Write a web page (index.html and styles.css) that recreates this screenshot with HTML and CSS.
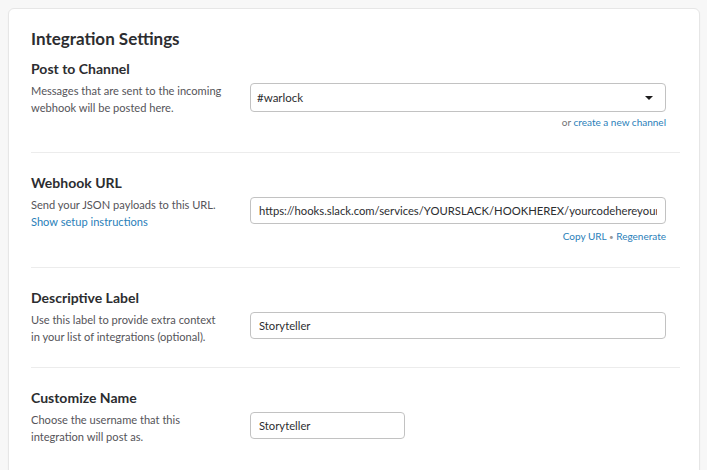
FILE: index.html
```html
<!DOCTYPE html>
<html lang="en">
<head>
<meta charset="utf-8">
<title>Integration Settings</title>
<link rel="stylesheet" href="styles.css">
</head>
<body>
<div class="page">
  <div class="card">
    <h1 class="title">Integration Settings</h1>

    <section class="section section-first">
      <h2 class="heading">Post to Channel</h2>
      <div class="row">
        <p class="desc">Messages that are sent to the incoming webhook will be posted here.</p>
        <div class="field">
          <div class="select"><span>#warlock</span><span class="caret"></span></div>
          <div class="links links-tight"><span class="muted">or</span> <a class="link" href="#">create a new channel</a></div>
        </div>
      </div>
    </section>

    <section class="section">
      <h2 class="heading">Webhook URL</h2>
      <div class="row">
        <p class="desc">Send your JSON payloads to this URL.<br><a class="link" href="#">Show setup instructions</a></p>
        <div class="field">
          <input class="input" type="text" value="https://hooks.slack.com/services/YOURSLACK/HOOKHEREX/yourcodehereyourcodehere">
          <div class="links"><a class="link" href="#">Copy URL</a> <span class="dot">•</span> <a class="link" href="#">Regenerate</a></div>
        </div>
      </div>
    </section>

    <section class="section">
      <h2 class="heading">Descriptive Label</h2>
      <div class="row">
        <p class="desc">Use this label to provide extra context in your list of integrations (optional).</p>
        <div class="field">
          <input class="input" type="text" value="Storyteller">
        </div>
      </div>
    </section>

    <section class="section section-last">
      <h2 class="heading">Customize Name</h2>
      <div class="row">
        <p class="desc">Choose the username that this integration will post as.</p>
        <div class="field">
          <input class="input input-short" type="text" value="Storyteller">
        </div>
      </div>
    </section>
  </div>
</div>
</body>
</html>
```

FILE: styles.css
```css
* { box-sizing: border-box; }

html, body {
  margin: 0;
  padding: 0;
  background: #f7f7f7;
  font-family: Lato, "Open Sans", "Liberation Sans", sans-serif;
  color: #2c2d30;
  overflow: hidden;
}

.page {
  padding: 8px 7px 0 8px;
}

.card {
  width: 692px;
  background: #ffffff;
  border: 1px solid #e6e6e6;
  border-radius: 6px;
  box-shadow: 0 1px 2px rgba(0, 0, 0, 0.03);
  padding: 18px 19px 40px 22px;
}

.title {
  margin: 0 0 8px 0;
  font-size: 17px;
  line-height: 24px;
  font-weight: 700;
  color: #2c2d30;
}

.section {
  padding: 20px 0 22px 0;
  border-bottom: 1px solid #ececec;
}

.section-first {
  padding-top: 0;
}

.section-last {
  border-bottom: none;
}

.heading {
  margin: 0 0 4px 0;
  font-size: 14px;
  line-height: 20px;
  font-weight: 700;
  color: #2c2d30;
}

.row {
  display: flex;
  align-items: flex-start;
}

.desc {
  width: 219px;
  flex-shrink: 0;
  margin: 0;
  font-size: 11.1px;
  line-height: 16.5px;
  color: #555459;
  padding-right: 25px;
}

.field {
  width: 416px;
  display: flex;
  flex-direction: column;
}

.select {
  height: 29px;
  border: 1px solid #c2c2c2;
  border-radius: 4px;
  background: #fff;
  display: flex;
  align-items: center;
  justify-content: space-between;
  padding: 0 12px 0 6px;
  font-size: 11.5px;
  color: #2c2d30;
}

.caret {
  width: 0;
  height: 0;
  border-left: 4px solid transparent;
  border-right: 4px solid transparent;
  border-top: 4px solid #1d1c1d;
  margin-top: 1px;
}

.input {
  height: 27px;
  width: 100%;
  border: 1px solid #c2c2c2;
  border-radius: 4px;
  background: #fff;
  padding: 0 8px;
  font-family: inherit;
  font-size: 11.25px;
  color: #2c2d30;
  outline: none;
  margin: 0;
}

.input-short {
  width: 155px;
}

.links {
  margin-top: 4px;
  text-align: right;
  font-size: 10px;
  line-height: 16px;
}

.links-tight {
  margin-top: 2px;
}

.link {
  color: #2a80b9;
  text-decoration: none;
}

.muted {
  color: #717274;
}

.dot {
  color: #9a9a9a;
  font-size: 8px;
}
```
